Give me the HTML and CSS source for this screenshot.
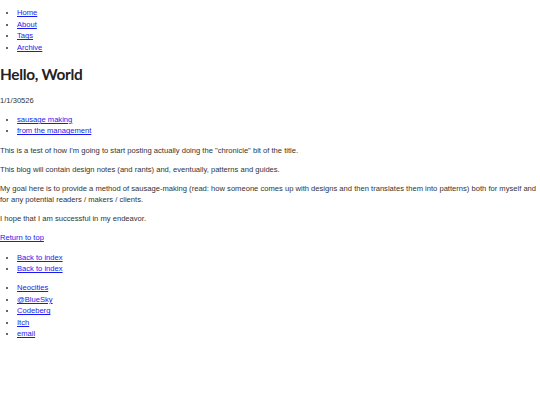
FILE: index.html
```html
<!DOCTYPE html>
<html lang="en">
<head>
    <meta charset="UTF-8">
    <meta name="viewport" content="width=device-width, initial-scale=1.0">
    <title>Hello, World</title>
    <link rel="stylesheet" href="styles.css">
</head>
<body>

    <nav class="site-nav">
        <ul>
            <li><a href="/">Home</a></li>
            <li><a href="/about.html">About</a></li>
            <li><a href="/tags.html">Tags</a></li>
            <li><a href="/archive.html">Archive</a></li>
        </ul>
    </nav>

    <main class="post">
        <h1 id="top">Hello, World</h1>
        <p class="post-date">1/1/30526</p>
        <ul class="post-tags">
            <li><a href="/tags/sausage-making.html">sausage making</a></li>
            <li><a href="/tags/from-the-management.html">from the management</a></li>
        </ul>

        <p>This is a test of how I'm going to start posting actually doing the "chronicle" bit of the title.</p>
        <p>This blog will contain design notes (and rants) and, eventually, patterns and guides.</p>
        <p>My goal here is to provide a method of sausage-making (read: how someone comes up with designs and then translates them into patterns) both for myself and for any potential readers / makers / clients.</p>
        <p>I hope that I am successful in my endeavor.</p>

        <p><a href="#top">Return to top</a></p>
        <ul>
            <li><a href="/">Back to index</a></li>
            <li><a href="/">Back to index</a></li>
        </ul>
    </main>

    <footer class="site-footer">
        <ul>
            <li><a href="#">Neocities</a></li>
            <li><a href="#">@BlueSky</a></li>
            <li><a href="#">Codeberg</a></li>
            <li><a href="#">Itch</a></li>
            <li><a href="#">email</a></li>
        </ul>
    </footer>

</body>
</html>
```

FILE: styles.css
```css
body {
    font-family: "Liberation Sans", Arial, sans-serif;
    font-size: 7.6px;
    line-height: 11.5px;
    color: #333;
    background-color: #fff;
    margin: 0;
}
a {
    color: #1a1aee;
}
ul {
    margin: 7.6px 0;
    padding-left: 17px;
}
p {
    margin: 7.6px 0;
}
.site-nav ul {
    margin-top: 7.3px;
}
h1 {
    font-family: Lato, "Open Sans", sans-serif;
    font-size: 15.4px;
    line-height: 21px;
    letter-spacing: -0.3px;
    font-weight: bold;
    color: #222;
    margin: 10.3px 0;
}
```
